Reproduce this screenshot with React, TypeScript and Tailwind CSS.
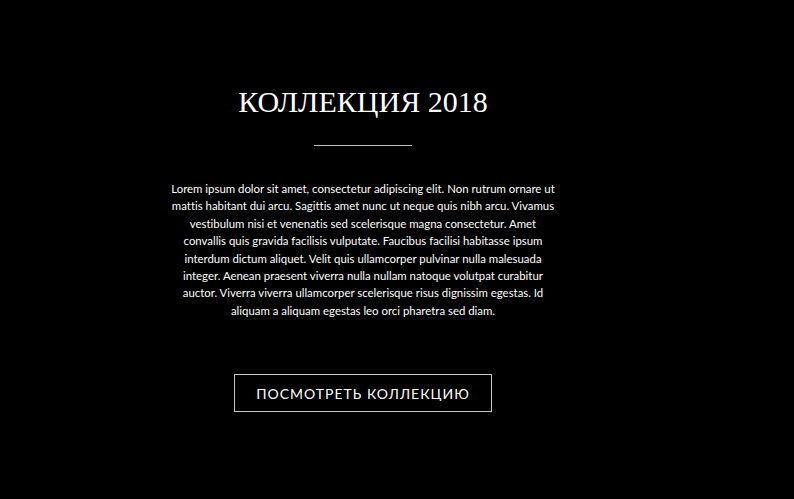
import React from "react";

const lines = [
  "Lorem ipsum dolor sit amet, consectetur adipiscing elit. Non rutrum ornare ut",
  "mattis habitant dui arcu. Sagittis amet nunc ut neque quis nibh arcu. Vivamus",
  "vestibulum nisi et venenatis sed scelerisque magna consectetur. Amet",
  "convallis quis gravida facilisis vulputate. Faucibus facilisi habitasse ipsum",
  "interdum dictum aliquet. Velit quis ullamcorper pulvinar nulla malesuada",
  "integer. Aenean praesent viverra nulla nullam natoque volutpat curabitur",
  "auctor. Viverra viverra ullamcorper scelerisque risus dignissim egestas. Id",
  "aliquam a aliquam egestas leo orci pharetra sed diam.",
];

export default function App() {
  return (
    <div className="w-[794px] h-[499px] bg-black overflow-hidden">
      <div className="w-[726px] flex flex-col items-center pt-[84px]">
        <h1 className="text-white text-[30px] leading-[36px] font-['Liberation_Serif',serif] font-normal">
          КОЛЛЕКЦИЯ 2018
        </h1>
        <div className="w-[98px] h-px bg-[#bdbdbd] mt-[25px]" />
        <p className="mt-[34px] text-white text-center text-[11.4px] leading-[17.4px] font-['Lato',sans-serif] whitespace-nowrap [font-variant-ligatures:none]">
          {lines.map((l, i) => (
            <React.Fragment key={i}>
              {l}
              {i < lines.length - 1 && <br />}
            </React.Fragment>
          ))}
        </p>
        <button className="mt-[55px] w-[258px] h-[38px] border border-[#c8c8c8] text-white text-[14px] tracking-[1px] font-['Lato',sans-serif]">
          ПОСМОТРЕТЬ КОЛЛЕКЦИЮ
        </button>
      </div>
    </div>
  );
}
